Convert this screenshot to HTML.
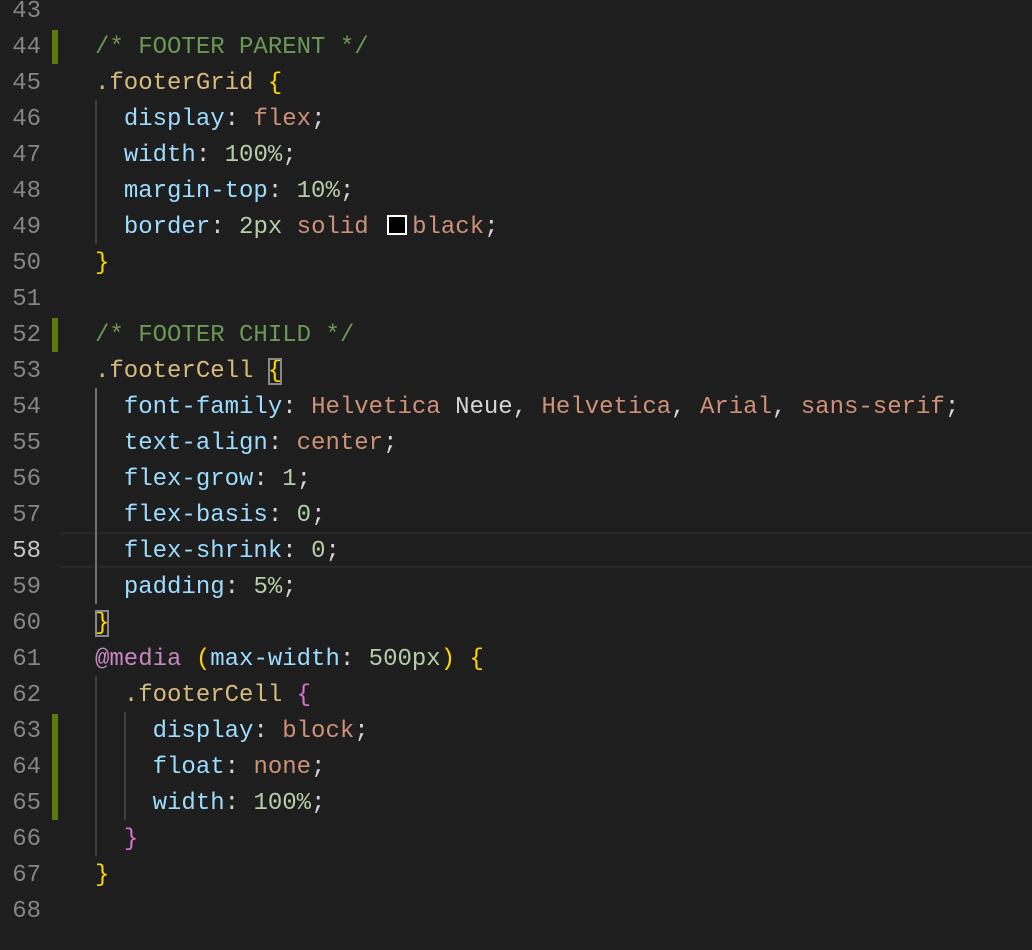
<!DOCTYPE html>
<html><head><meta charset="utf-8"><style>
html,body{margin:0;padding:0;background:#1e1e1e;width:1032px;height:950px;overflow:hidden}
body{font-family:"Liberation Mono",monospace;font-size:24px;color:#d4d4d4;position:relative}
.l{position:absolute;left:0;width:1032px;height:36px;line-height:36px;white-space:pre}
.n{position:absolute;top:2px;left:0;width:41px;text-align:right;color:#858585}
.c{position:absolute;top:2px;left:95px}
.g{position:absolute;left:52px;width:6px;background:#587c0c}
.ig{position:absolute;width:2px;background:#404040}
.cm{color:#6a9955}.s{color:#d7ba7d}.b{color:#ffd700}.p{color:#9cdcfe}.v{color:#ce9178}.nu{color:#b5cea8}.m{color:#c586c0}.pb{color:#da70d6}
.bm{outline:2px solid #888;outline-offset:-2px}
.sw{display:inline-block;width:16px;height:16px;border:2px solid #fff;background:#000;margin:0 5px 0 4px;vertical-align:-2px}
</style></head><body>
<div style="position:absolute;left:60px;top:532px;width:972px;height:32px;border-top:2px solid #282828;border-bottom:2px solid #282828"></div>
<div class="g" style="top:30px;height:34px"></div>
<div class="g" style="top:318px;height:34px"></div>
<div class="g" style="top:714px;height:106px"></div>
<div class="ig" style="left:95px;top:100px;height:144px"></div>
<div class="ig" style="left:95px;top:388px;height:216px;background:#707070"></div>
<div class="ig" style="left:95px;top:676px;height:180px"></div>
<div class="ig" style="left:124px;top:712px;height:108px"></div>

<div class="l" style="top:-8px"><span class="n">43</span></div>
<div class="l" style="top:28px"><span class="n">44</span><span class="c cm">/* FOOTER PARENT */</span></div>
<div class="l" style="top:64px"><span class="n">45</span><span class="c"><span class="s">.footerGrid</span> <span class="b">{</span></span></div>
<div class="l" style="top:100px"><span class="n">46</span><span class="c">  <span class="p">display</span>: <span class="v">flex</span>;</span></div>
<div class="l" style="top:136px"><span class="n">47</span><span class="c">  <span class="p">width</span>: <span class="nu">100%</span>;</span></div>
<div class="l" style="top:172px"><span class="n">48</span><span class="c">  <span class="p">margin-top</span>: <span class="nu">10%</span>;</span></div>
<div class="l" style="top:208px"><span class="n">49</span><span class="c">  <span class="p">border</span>: <span class="nu">2px</span> <span class="v">solid</span> <span class="sw"></span><span class="v">black</span>;</span></div>
<div class="l" style="top:244px"><span class="n">50</span><span class="c"><span class="b">}</span></span></div>
<div class="l" style="top:280px"><span class="n">51</span></div>
<div class="l" style="top:316px"><span class="n">52</span><span class="c cm">/* FOOTER CHILD */</span></div>
<div class="l" style="top:352px"><span class="n">53</span><span class="c"><span class="s">.footerCell</span> <span class="b bm">{</span></span></div>
<div class="l" style="top:388px"><span class="n">54</span><span class="c">  <span class="p">font-family</span>: <span class="v">Helvetica</span> Neue, <span class="v">Helvetica</span>, <span class="v">Arial</span>, <span class="v">sans-serif</span>;</span></div>
<div class="l" style="top:424px"><span class="n">55</span><span class="c">  <span class="p">text-align</span>: <span class="v">center</span>;</span></div>
<div class="l" style="top:460px"><span class="n">56</span><span class="c">  <span class="p">flex-grow</span>: <span class="nu">1</span>;</span></div>
<div class="l" style="top:496px"><span class="n">57</span><span class="c">  <span class="p">flex-basis</span>: <span class="nu">0</span>;</span></div>
<div class="l" style="top:532px"><span class="n" style="color:#c6c6c6">58</span><span class="c">  <span class="p">flex-shrink</span>: <span class="nu">0</span>;</span></div>
<div class="l" style="top:568px"><span class="n">59</span><span class="c">  <span class="p">padding</span>: <span class="nu">5%</span>;</span></div>
<div class="l" style="top:604px"><span class="n">60</span><span class="c"><span class="b bm">}</span></span></div>
<div class="l" style="top:640px"><span class="n">61</span><span class="c"><span class="m">@media</span> <span class="b">(</span><span class="p">max-width</span>: <span class="nu">500px</span><span class="b">)</span> <span class="b">{</span></span></div>
<div class="l" style="top:676px"><span class="n">62</span><span class="c">  <span class="s">.footerCell</span> <span class="pb">{</span></span></div>
<div class="l" style="top:712px"><span class="n">63</span><span class="c">    <span class="p">display</span>: <span class="v">block</span>;</span></div>
<div class="l" style="top:748px"><span class="n">64</span><span class="c">    <span class="p">float</span>: <span class="v">none</span>;</span></div>
<div class="l" style="top:784px"><span class="n">65</span><span class="c">    <span class="p">width</span>: <span class="nu">100%</span>;</span></div>
<div class="l" style="top:820px"><span class="n">66</span><span class="c">  <span class="pb">}</span></span></div>
<div class="l" style="top:856px"><span class="n">67</span><span class="c"><span class="b">}</span></span></div>
<div class="l" style="top:892px"><span class="n">68</span></div>
</body></html>
